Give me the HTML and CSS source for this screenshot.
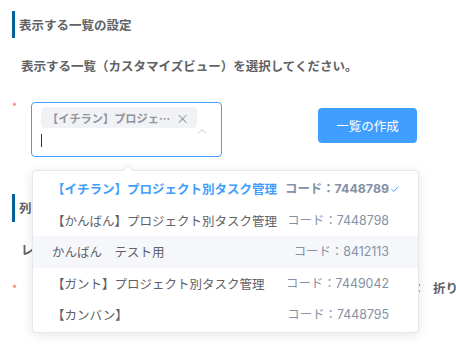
FILE: index.html
```html
<!DOCTYPE html>
<html lang="ja">
<head>
  <meta charset="UTF-8" />
  <meta name="viewport" content="width=device-width, initial-scale=1.0" />
  <title>表示する一覧の設定</title>
  <link rel="stylesheet" href="styles.css">
</head>
<body>
  <div class="page">
    <h2 class="section-title">表示する一覧の設定</h2>
    <p class="desc">表示する一覧（カスタマイズビュー）を選択してください。</p>

    <div class="form-row">
      <span class="req">*</span>
      <div class="select">
        <div class="tag">
          <span class="tag-text">【イチラン】プロジェクト別タスク管理</span>
          <span class="tag-close">×</span>
        </div>
        <span class="cursor"></span>
        <svg class="arrow-up" width="10" height="6" viewBox="0 0 10 6">
          <path d="M1 5.5 L5 1.5 L9 5.5" fill="none" stroke="#c0c4cc" stroke-width="1"/>
        </svg>

        <div class="dropdown">
          <div class="dropdown-list">
            <div class="item selected">
              <span class="name">【イチラン】プロジェクト別タスク管理</span>
              <span class="code">コード：7448789</span>
              <svg class="check" width="8" height="6" viewBox="0 0 8 6">
                <path d="M0.5 3.2 L2.8 5.4 L7.5 0.6" fill="none" stroke="#409eff" stroke-width="1"/>
              </svg>
            </div>
            <div class="item">
              <span class="name">【かんばん】プロジェクト別タスク管理</span>
              <span class="code">コード：7448798</span>
            </div>
            <div class="item hover">
              <span class="name">かんばん　テスト用</span>
              <span class="code">コード：8412113</span>
            </div>
            <div class="item">
              <span class="name">【ガント】プロジェクト別タスク管理</span>
              <span class="code">コード：7449042</span>
            </div>
            <div class="item">
              <span class="name">【カンバン】</span>
              <span class="code">コード：7448795</span>
            </div>
          </div>
        </div>
      </div>
      <button class="btn">一覧の作成</button>
    </div>

    <h2 class="section-title second">列の表示設定</h2>
    <p class="desc">レイアウトの設定を行ってください。</p>

    <div class="form-row wrap-row">
      <span class="req">*</span>
      <span class="wrap-label">セル内テキストの表示：</span>
      <span class="wrap-value">折り返し</span>
    </div>
  </div>
</body>
</html>
```

FILE: styles.css
```css
* { box-sizing: border-box; }
html, body {
  margin: 0;
  overflow: hidden;
}
body {
  font-family: "Noto Sans CJK JP", "Noto Sans", sans-serif;
  color: #606266;
  background: #fff;
  width: 456px;
  height: 347px;
}
.page {
  padding: 11px 0 0 12px;
}
.section-title {
  margin: 0;
  height: 27px;
  line-height: 27px;
  border-left: 3px solid #00629b;
  padding-left: 4px;
  font-size: 12.5px;
  font-weight: 700;
  color: #606266;
  white-space: nowrap;
}
.section-title.second {
  margin-top: 37px;
  height: 28px;
  line-height: 28px;
}
.desc {
  margin: 18px 0 0;
  padding-left: 9px;
  height: 20px;
  line-height: 20px;
  font-size: 12.5px;
  font-weight: 700;
  white-space: nowrap;
}
.form-row {
  display: flex;
  align-items: flex-start;
  margin-top: 26px;
}
.req {
  width: 19px;
  flex-shrink: 0;
  color: #f56c6c;
  font-size: 11px;
  line-height: 8px;
}
.select {
  position: relative;
  width: 191px;
  height: 55px;
  border: 1px solid #409eff;
  border-radius: 4px;
  padding: 4px 0 0 9px;
}
.tag {
  display: flex;
  align-items: center;
  justify-content: space-between;
  width: 156px;
  height: 21px;
  background: #f0f2f5;
  border-radius: 4px;
  padding: 0 8px 0 6px;
  font-size: 11.2px;
  font-weight: 700;
  color: #909399;
}
.tag-text {
  max-width: 124px;
  overflow: hidden;
  text-overflow: ellipsis;
  white-space: nowrap;
}
.tag-close {
  font-size: 13px;
  font-weight: 400;
  color: #909399;
}
.cursor {
  display: block;
  width: 1px;
  height: 13px;
  margin-top: 6px;
  background: #303133;
}
.arrow-up {
  position: absolute;
  right: 14px;
  top: 25px;
}
.btn {
  margin: 6px 0 0 96px;
  width: 99px;
  height: 35px;
  border: none;
  border-radius: 4px;
  background: #409eff;
  color: #fff;
  font-family: inherit;
  font-size: 12.5px;
  padding: 0;
}
.dropdown {
  position: absolute;
  left: 0;
  top: calc(100% + 14px);
  width: 387px;
  background: #fff;
  border: 1px solid #e4e7ed;
  border-radius: 4px;
  box-shadow: 0 2px 12px 0 rgba(0, 0, 0, 0.1);
  z-index: 10;
}
.dropdown::before,
.dropdown::after {
  content: "";
  position: absolute;
  left: 89px;
  border: 6px solid transparent;
  border-top-width: 0;
}
.dropdown::before {
  top: -6px;
  border-bottom-color: #e4e7ed;
}
.dropdown::after {
  top: -5px;
  border-bottom-color: #fff;
}
.dropdown-list {
  padding: 2px 0 1px;
}
.item {
  position: relative;
  display: flex;
  justify-content: space-between;
  height: 31.6px;
  line-height: 31.6px;
  padding: 0 29px 0 19px;
  font-size: 12.5px;
  color: #606266;
  white-space: nowrap;
}
.item.hover {
  background: #f5f7fa;
}
.item .code {
  font-family: Inter, "Noto Sans CJK JP", sans-serif;
  color: #8492a6;
  font-size: 12.4px;
}
.item.selected .name {
  color: #409eff;
  font-weight: 700;
}
.item.selected .code {
  font-weight: 700;
}
.check {
  position: absolute;
  right: 19px;
  top: 13px;
}
.wrap-row {
  margin-top: 18px;
}
.wrap-row .req {
  padding-top: 6px;
}
.wrap-label {
  width: 394px;
  flex-shrink: 0;
  text-align: right;
  font-size: 12.5px;
  line-height: 20px;
  white-space: nowrap;
}
.wrap-value {
  flex-shrink: 0;
  margin-left: 8px;
  font-size: 12.5px;
  font-weight: 700;
  line-height: 20px;
  white-space: nowrap;
}
```
